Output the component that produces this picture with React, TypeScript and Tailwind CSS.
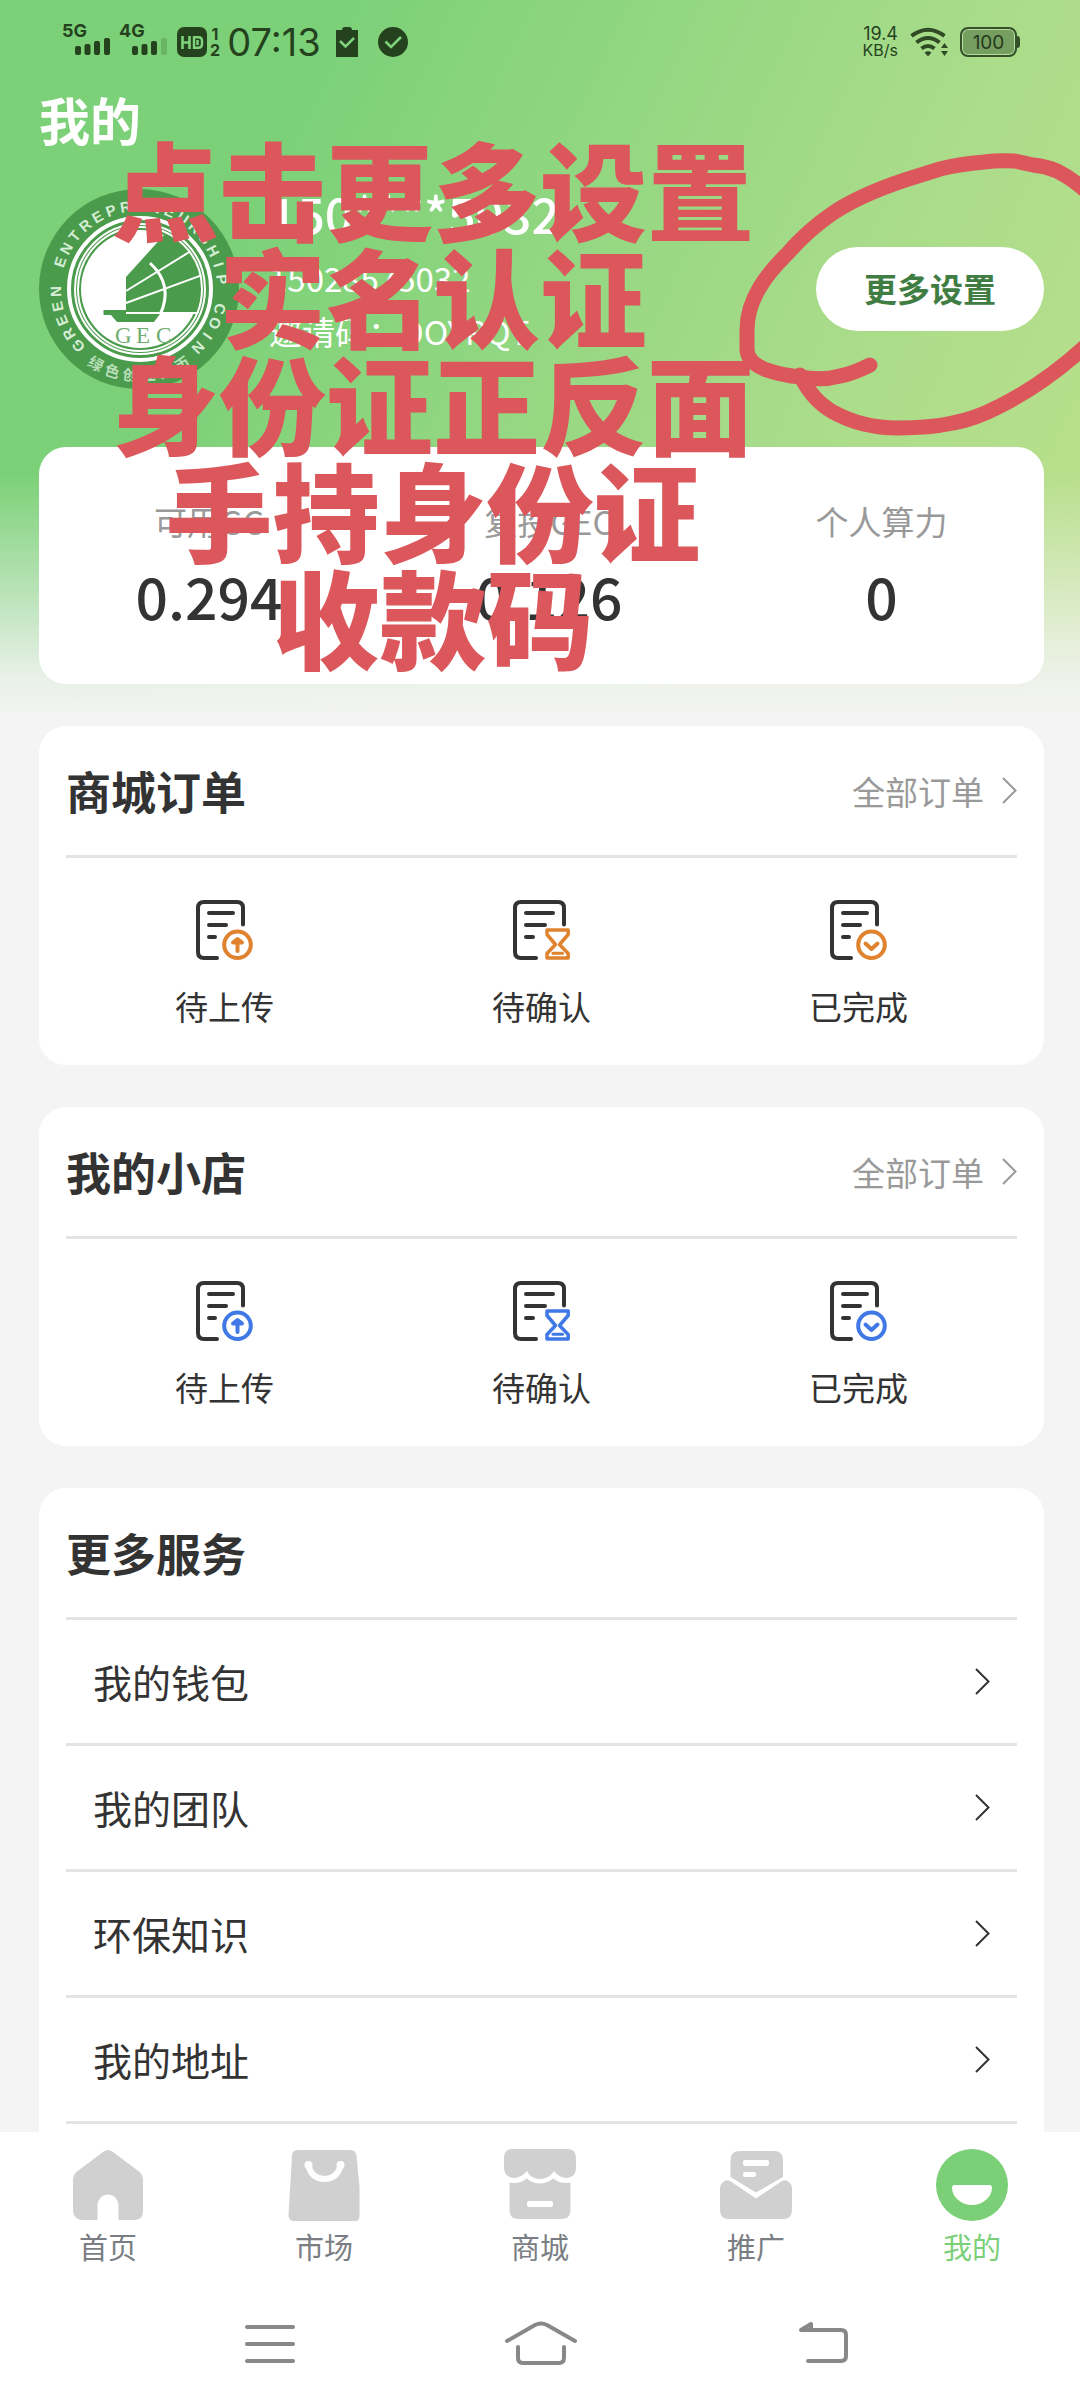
import React from "react";

const INK = "#333333";
const STATUS = "#25421f";
const RED = "#db575b";

const RING_TEXT = "GREEN ENTREPRENEURSHIP COIN";
const RING_CJK = "绿色创业货币";

function SignalBars({ dimLast }: { dimLast?: boolean }) {
  return (
    <svg width="35" height="17" viewBox="0 0 35 17" fill={STATUS}>
      <rect x="0" y="8" width="6" height="9" rx="2" />
      <rect x="9.5" y="6" width="6" height="11" rx="2" />
      <rect x="19" y="3" width="6" height="14" rx="2" />
      <rect x="29" y="0" width="6" height="17" rx="2" opacity={dimLast ? 0.2 : 1} />
    </svg>
  );
}

function Signal({ label, dimLast }: { label: string; dimLast?: boolean }) {
  return (
    <div className="flex h-9 w-12 flex-col">
      <span className="font-['Inter'] text-lg leading-[14px] font-bold">{label}</span>
      <div className="flex justify-end">
        <SignalBars dimLast={dimLast} />
      </div>
    </div>
  );
}

function StatusBar() {
  return (
    <div className="flex h-[84px] items-center justify-between pr-[60px] pl-[62px] text-[#25421f]">
      <div className="flex items-center">
        <Signal label="5G" />
        <div className="w-[9px]" />
        <Signal label="4G" dimLast />
        <div className="w-[10px]" />
        <svg width="30" height="30" viewBox="0 0 30 30">
          <rect width="30" height="30" rx="7" fill={STATUS} />
          <path d="M5.5 9v13M12.5 9v13M5.5 15.5h7" stroke="#7fd37b" strokeWidth="2.6" fill="none" />
          <path d="M17 10.2h4.500q3.500 0 3.500 3.500v3.600q0 3.500-3.500 3.500H17zM20.500 13v5" stroke="#7fd37b" strokeWidth="2.4" fill="none" />
        </svg>
        <div className="flex w-4 flex-col items-center font-['Inter'] text-base leading-4 font-bold">
          <span>1</span>
          <span>2</span>
        </div>
        <span className="w-[102px] text-center font-['Inter'] text-[38px] leading-[38px]">07:13</span>
        <div className="w-[11px]" />
        <svg width="22" height="30" viewBox="0 0 22 30">
          <path d="M0 3h6q0-3 3-3h4q3 0 3 3h6v27H0z" fill={STATUS} />
          <path d="M4 14l5.500 5.500L18 11" stroke="#7fd37b" strokeWidth="2.5" fill="none" />
        </svg>
        <div className="w-5" />
        <svg width="30" height="30" viewBox="0 0 30 30">
          <circle cx="15" cy="15" r="15" fill={STATUS} />
          <path d="M7.500 14.500l5.500 5.500 10-10" stroke="#7fd37b" strokeWidth="2.6" fill="none" />
        </svg>
      </div>
      <div className="flex items-center gap-3">
        <div className="flex flex-col items-end">
          <span className="font-['Inter'] text-lg leading-4">19.4</span>
          <span className="font-['Inter'] text-base leading-4">KB/s</span>
        </div>
        <svg width="38" height="30" viewBox="0 0 38 30">
          <g fill="none" stroke="#2f4a24" strokeWidth="4">
            <path d="M1.500 9Q18 -3.500 34.500 9" />
            <path d="M6.500 15.500Q18 6.500 29.500 15.500" />
            <path d="M11.500 21.500Q18 16.500 24.500 21.500" />
          </g>
          <path d="M14.500 25.500q3.500-2.500 7 0L18 29.500z" fill="#2f4a24" />
          <path d="M31 21l3.500-5 3.500 5zM31 24h7l-3.500 5z" fill="#2f4a24" />
        </svg>
        <div className="flex items-center">
          <div className="flex h-[30px] w-[57px] items-center justify-center rounded-lg border-2 border-[#35502a] bg-[#769e60] font-['Inter'] text-[19px] leading-none text-[#25391c] ring-1 ring-[#b5e09a] ring-inset">
            100
          </div>
          <div className="h-3 w-[3px] rounded-r-sm bg-[#35502a]" />
        </div>
      </div>
    </div>
  );
}

function Avatar() {
  const letters = RING_TEXT.split("");
  const cjk = RING_CJK.split("");
  return (
    <svg width="200" height="200" viewBox="0 0 200 200" className="shrink-0">
      <defs>
        <clipPath id="disc">
          <circle cx="101" cy="100" r="63" />
        </clipPath>
      </defs>
      <circle cx="100" cy="100" r="100" fill="#4b9b4c" />
      <circle cx="101" cy="100" r="71" fill="none" stroke="#fff" strokeWidth="4" />
      <circle cx="101" cy="100" r="65" fill="none" stroke="#fff" strokeWidth="2" />
      <circle cx="101" cy="100" r="59" fill="#fff" />
      <g clipPath="url(#disc)">
        <path d="M87 88L125 46L165 50L166 124L87 123z" fill="#4b9b4c" />
        <path d="M87 102L152 62M87 114L166 85M80 124H166" stroke="#fff" strokeWidth="2" />
        <path d="M111 74Q135 96 121 126" stroke="#fff" strokeWidth="3" fill="none" />
      </g>
      <circle cx="101" cy="100" r="62" fill="none" stroke="#fff" strokeWidth="2" />
      <path d="M64.500 121H87V125H121L115 133H78L72 126H64.500z" fill="#4b9b4c" />
      <g fontFamily="Liberation Serif" fontSize="23" fill="#6fae70">
        <text x="76" y="154">G</text>
        <text x="97" y="154">E</text>
        <text x="117" y="154">C</text>
      </g>
      <g fontFamily="Liberation Sans" fontSize="15" fontWeight="bold" fill="#d6eed6" textAnchor="middle">
        {letters.map((c, i) => (
          <text key={i} x="100" y="22" transform={`rotate(${-133 + i * 10.3} 100 100)`}>
            {c}
          </text>
        ))}
      </g>
      <g fontFamily="Noto Sans CJK SC" fontSize="15" fontWeight="bold" fill="#b9dfb9" textAnchor="middle">
        {cjk.map((c, i) => (
          <text key={i} x="100" y="192" transform={`rotate(${30 - i * 12} 100 100)`}>
            {c}
          </text>
        ))}
      </g>
    </svg>
  );
}

function Annotation() {
  return (
    <div className="pointer-events-none absolute inset-0 z-10">
      <p className="absolute top-[133px] left-[112px] text-center text-[107px] leading-[107px] font-black whitespace-nowrap text-[#db575b]">
        点击更多设置
        <br />
        实名认证
        <br />
        身份证正反面
        <br />
        手持身份证
        <br />
        收款码
      </p>
      <svg
        className="absolute top-[140px] right-0"
        width="350"
        height="310"
        viewBox="730 140 350 310"
        fill="none"
        stroke={RED}
        strokeWidth="15"
        strokeLinecap="round"
        strokeLinejoin="round"
      >
        <path d="M1090 195Q1075 180 1057 171Q1045 166 1033 165L1015 161Q998 160 984 162Q960 164 940 169L905 180Q860 195 833 213Q808 230 788 253Q768 273 760 287Q747 308 747 330V350Q748 362 764 369Q780 375 800 377Q822 381 840 376Q852 374 870 365" />
        <path d="M800 375Q812 400 833 412Q862 428 898 428Q930 428 953 423Q975 419 998 407Q1045 384 1090 342" />
      </svg>
    </div>
  );
}

type BadgeKind = "upload" | "confirm" | "done";

function OrderIcon({ kind, color }: { kind: BadgeKind; color: string }) {
  const wide = kind === "confirm";
  return (
    <svg width="57" height="60" viewBox="0 0 57 60" fill="none" strokeLinecap="round" strokeLinejoin="round" strokeWidth="4">
      <g stroke={INK}>
        <path
          d={
            wide
              ? "M51 24.500V8q0-6-6-6H8Q2 2 2 8v44q0 6 6 6h15"
              : "M47 24.500V8q0-6-6-6H8Q2 2 2 8v44q0 6 6 6h13"
          }
        />
        <path d={wide ? "M13 13h27M13 25h19M13 37h7" : "M13 13h24M13 25h17M13 37h6"} />
      </g>
      <g stroke={color}>
        {kind !== "confirm" && <circle cx="41.500" cy="44.700" r="13.300" />}
        {kind === "upload" && <path d="M41.500 51V41M37 42.500l4.500-3.500 4.500 3.500z" />}
        {kind === "done" && <path d="M35.500 43.500l6 5.500 6-5.500" />}
        {kind === "confirm" && (
          <>
            <path strokeWidth="3.500" d="M34 30h21.200v4.500L46.500 44.500l8.700 9v4.500H34v-4.500l8.500-9L34 34.500z" />
            <path strokeWidth="3" d="M40 53.300h9.500" />
          </>
        )}
      </g>
    </svg>
  );
}

function Chevron({ color }: { color: string }) {
  return (
    <svg width="15" height="27" viewBox="0 0 15 27" fill="none" stroke={color} strokeWidth="2">
      <path d="M1 1l12.500 12.500L1 26" />
    </svg>
  );
}

function OrderCard({ title, color }: { title: string; color: string }) {
  const items: { kind: BadgeKind; label: string }[] = [
    { kind: "upload", label: "待上传" },
    { kind: "confirm", label: "待确认" },
    { kind: "done", label: "已完成" },
  ];
  return (
    <section className="rounded-[27px] bg-white px-[27px] pb-[35px]">
      <header className="flex h-[132px] items-center justify-between border-b-3 border-[#e4e4e4]">
        <h2 className="text-[45px] leading-[66px] font-bold">{title}</h2>
        <a href="#orders" className="flex items-center gap-[18px] text-[33px] leading-[48px] text-[#999]">
          全部订单
          <Chevron color="#999" />
        </a>
      </header>
      <div className="grid grid-cols-3 pt-[42px]">
        {items.map((it) => (
          <button key={it.label} type="button" className="flex flex-col items-center gap-[22px]">
            <OrderIcon kind={it.kind} color={color} />
            <span className="text-[33px] leading-[48px]">{it.label}</span>
          </button>
        ))}
      </div>
    </section>
  );
}

function Stat({ label, value }: { label: string; value: string }) {
  return (
    <div className="flex flex-col items-center gap-2">
      <span className="text-[33px] leading-[48px] text-[#999]">{label}</span>
      <span className="text-[57px] leading-[84px] font-medium">{value}</span>
    </div>
  );
}

const TABS = [
  {
    label: "首页",
    icon: (
      <path d="M31 3q5-4 10 0l26 19.500q4 3 4 9V62q0 9-9 9H46.500V56a10.500 10.500 0 0 0-21 0v15H10Q1 70 1 61V31.500q0-6 4-9z" />
    ),
  },
  {
    label: "市场",
    icon: (
      <>
        <path d="M10 1h52q6 0 6.500 6L71.500 38V67q0 5-4 5H5q-4.500-1-4.500-6L4 7q0-6 6-6z" />
        <path d="M20.500 17Q24 30 36.500 30T52.500 17" fill="none" stroke="#fff" strokeWidth="6" strokeLinecap="round" />
        <circle cx="20.500" cy="16" r="4" fill="#fff" />
        <circle cx="52.500" cy="16" r="4" fill="#fff" />
      </>
    ),
  },
  {
    label: "商城",
    icon: (
      <>
        <path d="M9 0h54q9 0 9 9v10q0 9-9 10-8 0-13-7-5 8-14 8t-13-8q-6 7-13 7-10-1-10-10V9q0-9 9-9z" />
        <path d="M5.500 33.500q10 2 17-4 13 10 27 0 7 6 17 4V61q0 9-9 9h-43q-9 0-9-9z" />
        <rect x="23" y="52" width="26" height="6" rx="2" fill="#fff" />
      </>
    ),
  },
  {
    label: "推广",
    icon: (
      <>
        <path d="M20 2h34q9 0 9 9v17L36 43.500 10.500 28V11q0-9 9.500-9z" />
        <path d="M3 33q3-3 7-1l26 17.500L62 32q4-2 7 1 3 3 3 6v22q0 9-9 9H9q-9 0-9-9V39q0-3 3-6z" />
        <rect x="23" y="11" width="26" height="6" rx="2" fill="#fff" />
        <rect x="23" y="23" width="13" height="5" rx="2" fill="#fff" />
      </>
    ),
  },
  {
    label: "我的",
    active: true,
    icon: (
      <>
        <circle cx="36" cy="36" r="36" />
        <path d="M18 36h36q2 0 2 2.500a20 17.500 0 0 1-40 0q0-2.500 2-2.500z" fill="#fff" />
      </>
    ),
  },
];

export default function App() {
  return (
    <div className="relative flex h-screen flex-col bg-[#f4f4f4] font-['Noto_Sans_CJK_SC',sans-serif] text-[#333]">
      <main className="relative min-h-0 flex-1 overflow-x-hidden overflow-y-auto [scrollbar-width:none]">
        <div className="absolute inset-x-0 top-0 h-[720px] bg-[linear-gradient(115deg,#7cd178_25%,#a9dc8a_70%,#bde08c_100%)]">
          <div className="h-full bg-[linear-gradient(to_bottom,rgba(244,244,244,0)_66%,rgba(244,244,244,0.5)_82%,rgba(244,244,244,0.9)_94%,#f4f4f4_100%)]" />
        </div>

        <div className="relative">
          <StatusBar />
          <h1 className="pl-[39px] text-[51px] leading-[70px] font-bold text-white">我的</h1>

          <div className="flex items-center justify-between pt-[35px] pr-9 pb-[58px] pl-[39px]">
            <div className="flex items-start gap-[30px]">
              <Avatar />
              <div className="flex flex-col text-white">
                <span className="text-[49px] leading-[48px] font-medium">150****5032</span>
                <span className="mt-2 text-[33px] leading-[66px]">15028575032</span>
                <span className="text-[33px] leading-[40px]">邀请码：DOYRQT</span>
              </div>
            </div>
            <button
              type="button"
              className="h-[84px] w-[228px] rounded-full bg-white text-[33px] font-bold text-[#3f7d42]"
            >
              更多设置
            </button>
          </div>

          <div className="flex flex-col gap-[42px] pr-9 pl-[39px]">
            <section className="flex justify-around rounded-[27px] bg-white pt-[50px] pb-[47px]">
              <Stat label="可用GC" value="0.294" />
              <Stat label="复投GEC" value="0.126" />
              <Stat label="个人算力" value="0" />
            </section>

            <OrderCard title="商城订单" color="#e0832f" />
            <OrderCard title="我的小店" color="#4079e6" />

            <section className="rounded-t-[27px] bg-white px-[27px]">
              <h2 className="flex h-[132px] items-center border-b-3 border-[#e4e4e4] text-[45px] font-bold">更多服务</h2>
              <ul>
                {["我的钱包", "我的团队", "环保知识", "我的地址"].map((label) => (
                  <li key={label}>
                    <a
                      href="#service"
                      className="flex h-[126px] items-center justify-between border-b-3 border-[#e4e4e4] px-[27px] text-[39px]"
                    >
                      {label}
                      <Chevron color={INK} />
                    </a>
                  </li>
                ))}
              </ul>
              <div className="h-9" />
            </section>
          </div>
        </div>

        <Annotation />
      </main>

      <footer className="h-[276px] shrink-0 bg-white">
        <nav className="grid grid-cols-5 pt-[17px]">
          {TABS.map((t) => (
            <a
              key={t.label}
              href="#tab"
              className={
                t.active
                  ? "flex flex-col items-center gap-[2px] text-[#7bd077]"
                  : "flex flex-col items-center gap-[2px] text-[#7a7e83]"
              }
            >
              <svg width="72" height="72" viewBox="0 0 72 72" fill={t.active ? "#7bd077" : "#d0d0d0"}>
                {t.icon}
              </svg>
              <span className="text-[29px] leading-[46px]">{t.label}</span>
            </a>
          ))}
        </nav>
        <div className="grid grid-cols-[1fr_270px_270px_270px_1fr] pt-[50px]">
          <div />
          {[
            { name: "最近任务", d: "M17 8h46M17 25h46M17 42h46" },
            { name: "主屏幕", d: "M7 22L35 6q6-3 12 0l28 16M18 28v11q0 5 5 5h36q5 0 5-5V28" },
            { name: "返回", d: "M38 11h33q5 0 5 5v21q0 5-5 5H38M31 11l10-6v6z" },
          ].map((b) => (
            <button key={b.name} type="button" aria-label={b.name} className="flex justify-center">
              <svg width="80" height="50" viewBox="0 0 80 50" fill="none" stroke="#888" strokeWidth="4" strokeLinecap="round" strokeLinejoin="round">
                <path d={b.d} />
              </svg>
            </button>
          ))}
          <div />
        </div>
      </footer>
    </div>
  );
}
